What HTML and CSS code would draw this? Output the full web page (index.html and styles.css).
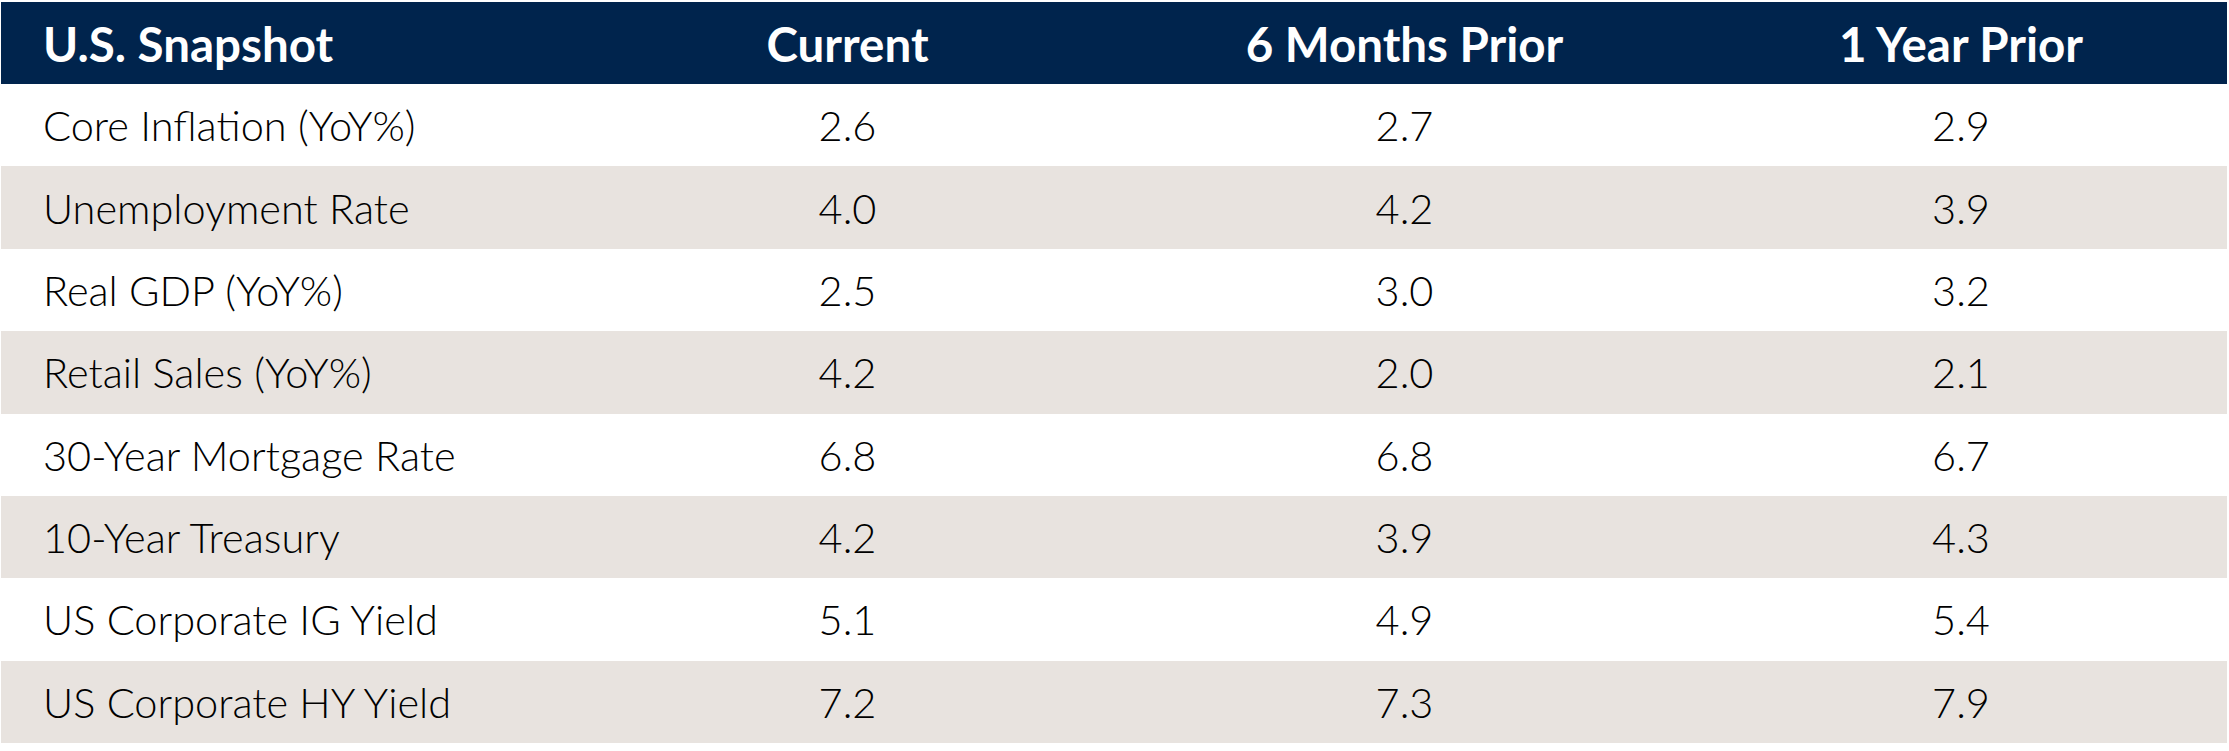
FILE: index.html
```html
<!DOCTYPE html>
<html lang="en">
<head>
<meta charset="utf-8">
<title>U.S. Snapshot</title>
<link rel="stylesheet" href="styles.css">
</head>
<body>
<div class="snapshot">
  <div class="row head">
    <div class="cell label">U.S. Snapshot</div>
    <div class="cell">Current</div>
    <div class="cell">6 Months Prior</div>
    <div class="cell last">1 Year Prior</div>
  </div>
  <div class="row">
    <div class="cell label">Core Inflation (YoY%)</div>
    <div class="cell">2.6</div>
    <div class="cell">2.7</div>
    <div class="cell last">2.9</div>
  </div>
  <div class="row alt">
    <div class="cell label">Unemployment Rate</div>
    <div class="cell">4.0</div>
    <div class="cell">4.2</div>
    <div class="cell last">3.9</div>
  </div>
  <div class="row">
    <div class="cell label">Real GDP (YoY%)</div>
    <div class="cell">2.5</div>
    <div class="cell">3.0</div>
    <div class="cell last">3.2</div>
  </div>
  <div class="row alt">
    <div class="cell label">Retail Sales (YoY%)</div>
    <div class="cell">4.2</div>
    <div class="cell">2.0</div>
    <div class="cell last">2.1</div>
  </div>
  <div class="row">
    <div class="cell label">30-Year Mortgage Rate</div>
    <div class="cell">6.8</div>
    <div class="cell">6.8</div>
    <div class="cell last">6.7</div>
  </div>
  <div class="row alt">
    <div class="cell label">10-Year Treasury</div>
    <div class="cell">4.2</div>
    <div class="cell">3.9</div>
    <div class="cell last">4.3</div>
  </div>
  <div class="row">
    <div class="cell label">US Corporate IG Yield</div>
    <div class="cell">5.1</div>
    <div class="cell">4.9</div>
    <div class="cell last">5.4</div>
  </div>
  <div class="row alt">
    <div class="cell label">US Corporate HY Yield</div>
    <div class="cell">7.2</div>
    <div class="cell">7.3</div>
    <div class="cell last">7.9</div>
  </div>
</div>
</body>
</html>
```

FILE: styles.css
```css
html, body {
  margin: 0;
  padding: 0;
  background: #ffffff;
}

body {
  font-family: "Lato", "Liberation Sans", sans-serif;
  color: #000000;
}

.snapshot {
  margin: 2px 2px 0 1px;
  display: flex;
  flex-direction: column;
}

.row {
  display: grid;
  grid-template-columns: 568px 557px 557px 1fr;
  height: 82.375px;
  align-items: center;
  font-size: 41.5px;
  font-weight: 300;
  background: #ffffff;
}

.row.alt {
  background: #e8e3df;
}

.row.head {
  height: 82px;
  background: #00244d;
  color: #ffffff;
  font-size: 47.5px;
  font-weight: 700;
}

.cell {
  text-align: center;
  white-space: nowrap;
}

.cell.label {
  text-align: left;
  padding-left: 42px;
}

.cell.last {
  padding-left: 12px;
}
```
